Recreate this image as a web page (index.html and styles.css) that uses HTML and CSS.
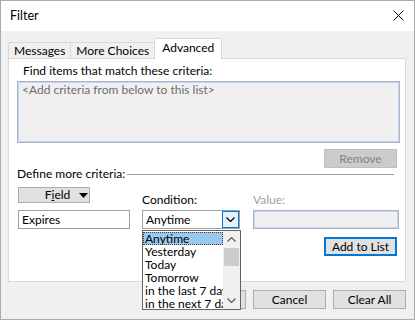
FILE: index.html
```html
<!DOCTYPE html>
<html>
<head>
    <meta charset="UTF-8">
    <title>Filter</title>
    <link rel="stylesheet" href="styles.css">
</head>
<body>
    <div class="window">
        <div class="titlebar">
            <span class="title">Filter</span>
            <svg class="closeIcon" width="11" height="11" viewBox="0 0 11 11">
                <path d="M0.5 0.5 L10.5 10.5 M10.5 0.5 L0.5 10.5" stroke="#000" stroke-width="1" fill="none"/>
            </svg>
        </div>

        <div class="content">
            <div class="tabs">
                <div class="tab">Messages</div>
                <div class="tab">More Choices</div>
                <div class="tab selected">Advanced</div>
            </div>

            <div class="panel">
                <div class="findLabel">Find items that match these criteria:</div>
                <div class="criteriaList">&lt;Add criteria from below to this list&gt;</div>

                <div class="removeRow">
                    <button class="btn disabled">Remove</button>
                </div>

                <div class="defineRow">
                    <span>Define more criteria:</span>
                    <div class="defineLine"></div>
                </div>

                <div class="labelRow">
                    <div class="colField">
                        <button class="btn fieldBtn">
                            <span>F<u>i</u>eld</span>
                            <svg width="9" height="5" viewBox="0 0 9 5"><path d="M0 0 L9 0 L4.5 5 Z" fill="#000"/></svg>
                        </button>
                    </div>
                    <div class="colCond label">Condition:</div>
                    <div class="colValue label muted">Value:</div>
                </div>

                <div class="inputRow">
                    <div class="colField textBox">Expires</div>
                    <div class="colCond combo">
                        <span class="comboText">Anytime</span>
                        <span class="comboArrow">
                            <svg width="9" height="5" viewBox="0 0 9 5"><path d="M0.5 0.5 L4.5 4.5 L8.5 0.5" stroke="#000" stroke-width="1.2" fill="none"/></svg>
                        </span>
                    </div>
                    <div class="colValue textBox disabledBox"></div>
                </div>

                <div class="addRow">
                    <button class="btn defaultBtn">Add to List</button>
                </div>

                <div class="dropList">
                    <div class="items">
                        <div class="item active">Anytime</div>
                        <div class="item">Yesterday</div>
                        <div class="item">Today</div>
                        <div class="item">Tomorrow</div>
                        <div class="item">in the last 7 days</div>
                        <div class="item">in the next 7 days</div>
                    </div>
                    <div class="scrollbar">
                        <div class="scrollArrow">
                            <svg width="9" height="5" viewBox="0 0 9 5"><path d="M0.5 4.5 L4.5 0.5 L8.5 4.5" stroke="#606060" stroke-width="1.3" fill="none"/></svg>
                        </div>
                        <div class="thumb"></div>
                        <div class="track"></div>
                        <div class="scrollArrow">
                            <svg width="9" height="5" viewBox="0 0 9 5"><path d="M0.5 0.5 L4.5 4.5 L8.5 0.5" stroke="#606060" stroke-width="1.3" fill="none"/></svg>
                        </div>
                    </div>
                </div>
            </div>

            <div class="bottomRow">
                <button class="btn">OK</button>
                <button class="btn">Cancel</button>
                <button class="btn">Clear All</button>
            </div>
        </div>
    </div>
</body>
</html>
```

FILE: styles.css
```css
body {
    margin: 0;
    padding: 0;
    font-family: Lato, "Noto Sans", sans-serif;
    font-size: 12px;
    color: #000;
}

.window {
    width: 415px;
    height: 320px;
    box-sizing: border-box;
    border: 1px solid #ababab;
    background-color: #f0f0f0;
    position: relative;
    overflow: hidden;
}

.titlebar {
    height: 30px;
    background-color: #fff;
    display: flex;
    align-items: center;
    justify-content: space-between;
    padding: 0 10px 0 9px;
}

.title {
    font-size: 12.5px;
    line-height: 14px;
    margin-top: -1px;
}

.closeIcon {
    margin-top: -1px;
}

.content {
    padding: 7px 0 0 7px;
}

.tabs {
    display: flex;
    align-items: flex-end;
    height: 20px;
    position: relative;
    z-index: 1;
}

.tab {
    height: 16px;
    box-sizing: border-box;
    line-height: 15px;
    padding: 0 5px;
    border: 1px solid #d9d9d9;
    border-bottom: none;
    margin-right: -1px;
    background-color: #f0f0f0;
}

.tab.selected {
    height: 21px;
    line-height: 17px;
    background-color: #fff;
    margin-bottom: -1px;
    padding: 0 7px;
}

.panel {
    width: 398px;
    height: 224px;
    box-sizing: border-box;
    border: 1px solid #d9d9d9;
    background-color: #fff;
    position: relative;
}

.findLabel {
    margin: 5px 0 0 14px;
    line-height: 14px;
}

.criteriaList {
    margin: 3px 0 0 8px;
    width: 383px;
    height: 62px;
    box-sizing: border-box;
    border: 1px solid #a7b5c9;
    box-shadow: inset 0 0 0 1px #c9d6e8;
    background-color: #f0f0f0;
    color: #6d6d6d;
    padding: 1px 4px;
    line-height: 14px;
}

.btn {
    font-family: inherit;
    font-size: 12px;
    color: #000;
    width: 73px;
    height: 19px;
    box-sizing: border-box;
    padding: 0;
    margin: 0;
    background-color: #e1e1e1;
    border: 1px solid #adadad;
    line-height: 15px;
}

.btn.disabled {
    background-color: #cccccc;
    border-color: #bfbfbf;
    color: #838383;
}

.removeRow {
    margin: 6px 0 0 315px;
    height: 19px;
    display: flex;
}

.defineRow {
    display: flex;
    align-items: center;
    height: 12px;
    line-height: 12px;
    margin-left: 8px;
}

.defineLine {
    flex: 1;
    border-top: 1px solid #a0a0a0;
    margin: 1px 11px 0 2px;
}

.labelRow {
    display: flex;
    align-items: flex-end;
    height: 23px;
    margin-top: 7px;
}

.colField {
    margin-left: 9px;
    width: 112px;
}

.colCond {
    margin-left: 12px;
    width: 98px;
}

.colValue {
    margin-left: 13px;
    width: 146px;
}

.labelRow .colField {
    align-self: flex-start;
}

.label {
    line-height: 12px;
    margin-bottom: 4px;
}

.muted {
    color: #a0a0a0;
}

.fieldBtn {
    width: 72px;
    height: 16px;
    display: flex;
    align-items: center;
    line-height: 14px;
    padding: 0 0 0 17px;
}

.fieldBtn span {
    width: 43px;
}

.inputRow {
    display: flex;
    height: 19px;
}

.textBox {
    height: 19px;
    box-sizing: border-box;
    border: 1px solid #a0a0a0;
    background-color: #fff;
    padding: 0 3px;
    line-height: 17px;
}

.disabledBox {
    background-color: #f0f0f0;
    border-color: #a7b5c9;
    box-shadow: inset 0 0 0 1px #c9d6e8;
}

.combo {
    height: 19px;
    box-sizing: border-box;
    border: 1px solid #a0a0a0;
    background-color: #fff;
    display: flex;
    justify-content: space-between;
}

.comboText {
    line-height: 17px;
    padding-left: 3px;
}

.comboArrow {
    width: 17px;
    box-sizing: border-box;
    border: 1px solid #0078d7;
    background-color: #e5f1fb;
    display: flex;
    align-items: center;
    justify-content: center;
}

.addRow {
    margin: 8px 0 0 315px;
    display: flex;
}

.defaultBtn {
    border: 2px solid #0078d7;
    line-height: 14px;
}

.dropList {
    position: absolute;
    left: 133px;
    top: 171px;
    width: 99px;
    height: 80px;
    box-sizing: border-box;
    border: 1px solid #646464;
    background-color: #fff;
    display: flex;
    z-index: 2;
}

.items {
    flex: 1;
    overflow: hidden;
    padding-top: 1px;
}

.item {
    height: 13px;
    line-height: 13px;
    padding-left: 2px;
    white-space: nowrap;
    box-sizing: border-box;
}

.item.active {
    background-color: #99c9ef;
    outline: 1px dotted #5a3b2a;
    outline-offset: -1px;
}

.scrollbar {
    width: 17px;
    background-color: #f0f0f0;
    display: flex;
    flex-direction: column;
}

.scrollArrow {
    height: 17px;
    display: flex;
    align-items: center;
    justify-content: center;
}

.thumb {
    height: 18px;
    background-color: #cdcdcd;
    margin: 0 1px;
}

.track {
    flex: 1;
}

.bottomRow {
    display: flex;
    justify-content: flex-end;
    gap: 7px;
    margin-top: 8px;
    padding-right: 8px;
}
```
